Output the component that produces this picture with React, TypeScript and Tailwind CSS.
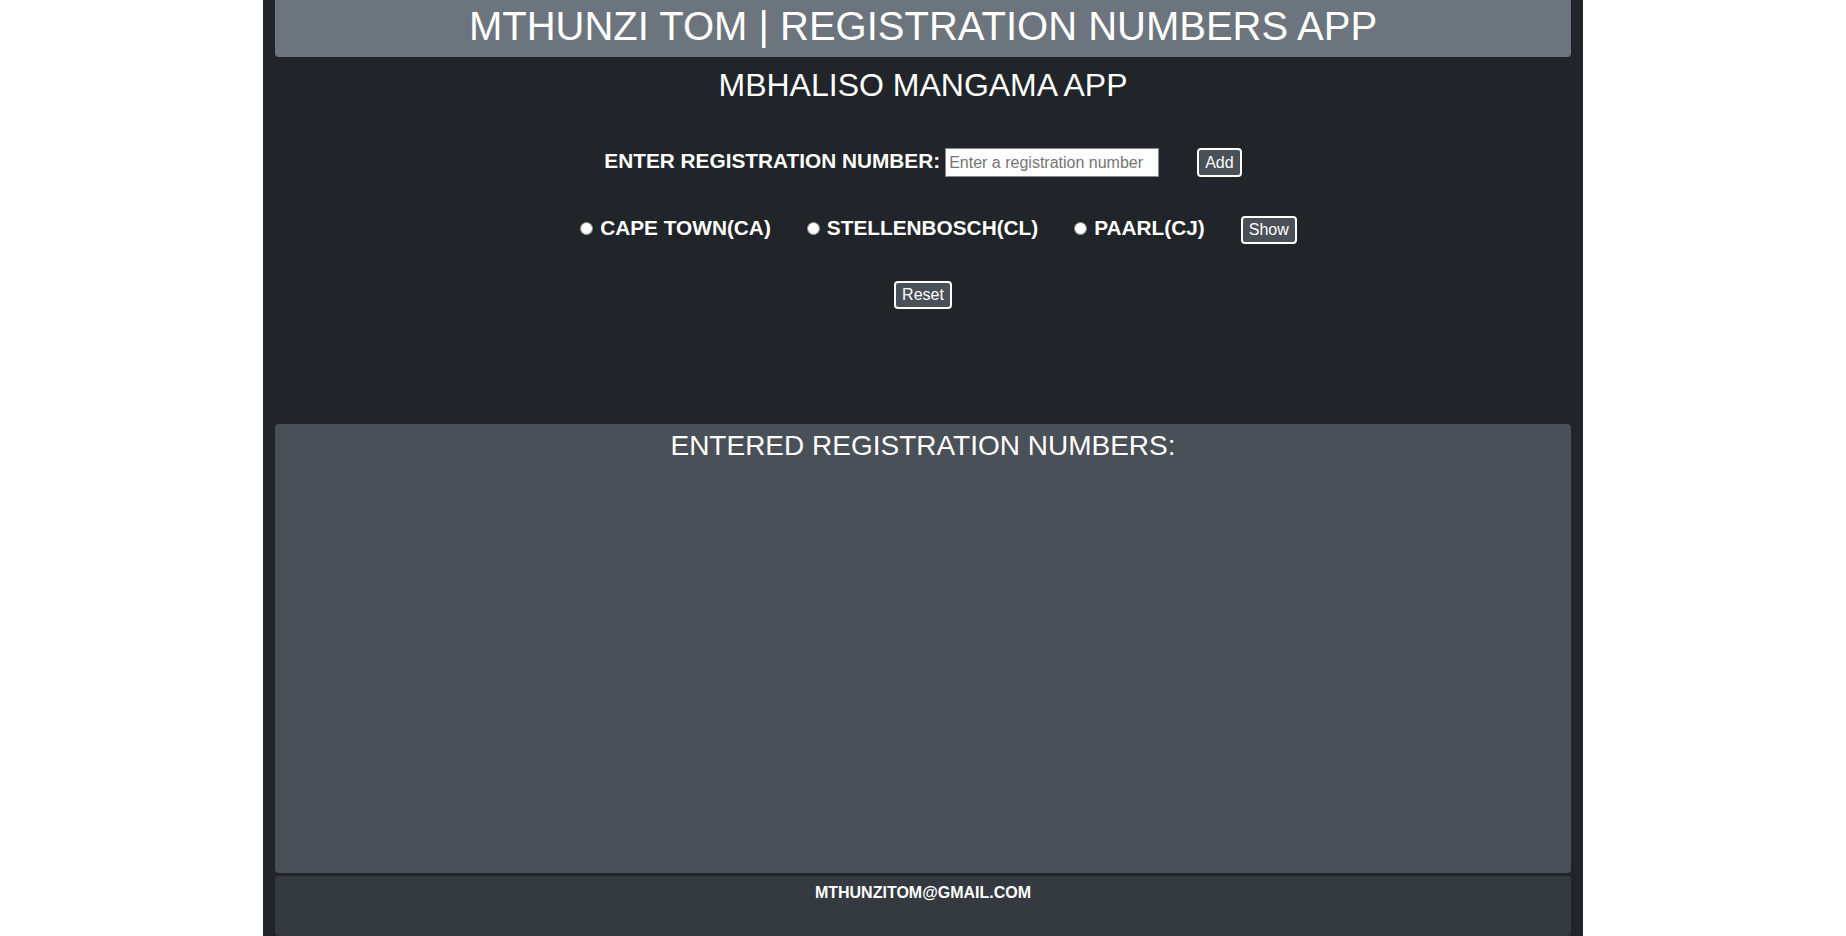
import { useState } from "react";

// ============================================
// Small bordered button used in the form rows
// ============================================
function OutlineButton({ label }: { label: string }) {
  return (
    <button className="h-[28px] px-[6px] rounded border-2 border-white bg-[#495057] text-[16px] leading-[20px] text-white">
      {label}
    </button>
  );
}

// ============================================
// Town radio with its bold caption
// ============================================
function TownRadio({
  label,
  value,
  picked,
  onPick,
}: {
  label: string;
  value: string;
  picked: string;
  onPick: (v: string) => void;
}) {
  return (
    <label className="flex items-center gap-[7px] cursor-pointer">
      <input
        type="radio"
        name="town"
        value={value}
        checked={picked === value}
        onChange={() => onPick(value)}
        className="m-0 mb-[3px] w-[13px] h-[13px]"
      />
      <span className="mb-[4px] text-[20.8px] font-bold leading-[24px] text-white">{label}</span>
    </label>
  );
}

export default function App() {
  const [town, setTown] = useState("");
  const [reg, setReg] = useState("");

  return (
    <div className="w-full bg-white font-['Liberation_Sans',Arial,sans-serif]">
      <div className="w-[1320px] h-[936px] mx-auto bg-[#212529] flex flex-col overflow-hidden">
        {/* header */}
        <div className="mx-3 h-[57px] shrink-0 rounded-b bg-[#6c757d] pt-[2px] text-center">
          <h1 className="text-[40px] leading-[48px] text-white">
            MTHUNZI TOM | REGISTRATION NUMBERS APP
          </h1>
        </div>

        <h2 className="mt-[9px] text-center text-[32px] leading-[38px] text-white">
          MBHALISO MANGAMA APP
        </h2>

        {/* entry row */}
        <div className="mt-[44px] flex items-center justify-center h-[29px]">
          <span className="mb-[4px] text-[20.8px] font-bold leading-[24px] text-white">
            ENTER REGISTRATION NUMBER:
          </span>
          <input
            type="text"
            value={reg}
            onChange={(e) => setReg(e.target.value)}
            placeholder="Enter a registration number"
            className="ml-[5px] w-[214px] h-[29px] px-[3px] bg-white border border-[#8a8a8a] text-[16px] text-black placeholder:text-[#757575] outline-none"
          />
          <button className="ml-[38px] h-[29px] px-[6px] rounded border-2 border-white bg-[#495057] text-[16px] leading-[20px] text-white">
            Add
          </button>
        </div>

        {/* town filter row */}
        <div className="mt-[39px] pl-[31px] flex items-center justify-center gap-[36px] h-[28px]">
          <TownRadio label="CAPE TOWN(CA)" value="CA" picked={town} onPick={setTown} />
          <TownRadio label="STELLENBOSCH(CL)" value="CL" picked={town} onPick={setTown} />
          <TownRadio label="PAARL(CJ)" value="CJ" picked={town} onPick={setTown} />
          <OutlineButton label="Show" />
        </div>

        <div className="mt-[37px] flex justify-center">
          <OutlineButton label="Reset" />
        </div>

        {/* list panel */}
        <div className="mx-3 mt-[115px] h-[449px] shrink-0 rounded bg-[#495057] pt-[5px] text-center">
          <h3 className="text-[28px] leading-[34px] text-white">ENTERED REGISTRATION NUMBERS:</h3>
        </div>

        {/* footer */}
        <div className="mx-3 mt-[3px] h-[60px] shrink-0 rounded bg-[#343a40] pt-[7px] text-center">
          <h6 className="text-[16px] font-bold leading-[19px] text-white">MTHUNZITOM@GMAIL.COM</h6>
        </div>
      </div>
    </div>
  );
}
